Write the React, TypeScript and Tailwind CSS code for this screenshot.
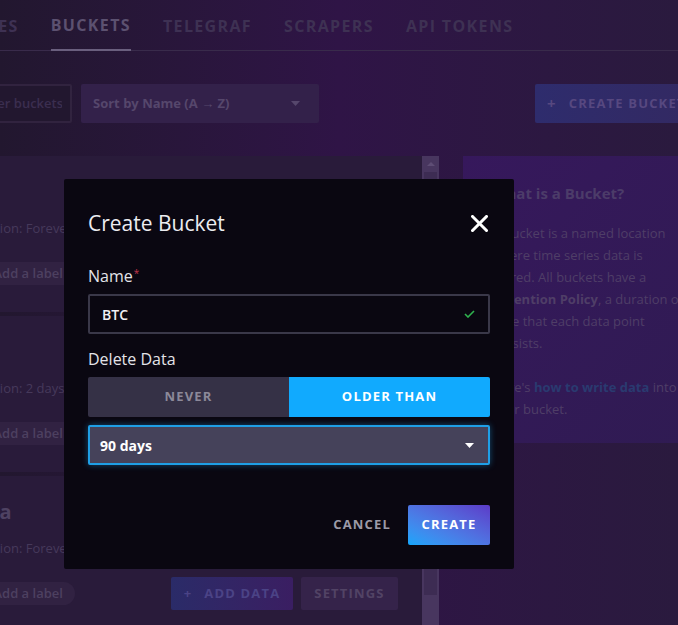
import React from 'react';

interface Bucket {
  name: string;
  retention: string;
}

const tabs = ['SOURCES', 'BUCKETS', 'TELEGRAF', 'SCRAPERS', 'API TOKENS'];

const buckets: Bucket[] = [
  { name: 'LTC', retention: 'Forever' },
  { name: 'SOL', retention: '2 days' },
  { name: 'Tesla', retention: 'Forever' },
];

const Caret = ({ className }: { className?: string }) => (
  <svg width="9" height="5" viewBox="0 0 9 5" className={className}>
    <path d="M0 0h9L4.5 5z" fill="currentColor" />
  </svg>
);

const BucketCard = ({ bucket }: { bucket: Bucket }) => (
  <div className="h-[156px] mb-[4px] bg-[#291b3a] pl-4 pr-6 pt-[23px]">
    <div className="text-[20px] leading-[26px] font-bold text-[#4e4262]">{bucket.name}</div>
    <div className="mt-[14px] text-[13px] leading-[18px] text-[#46395a]">Retention: {bucket.retention}</div>
    <div className="mt-[20px] flex items-center h-[33px]">
      <div className="h-[23px] rounded-full bg-[#312242] pl-3 pr-3 flex items-center gap-[14px] text-[13px] font-semibold text-[#4d4060]">
        <span>+</span>
        <span>Add a label</span>
      </div>
      <div className="ml-auto flex gap-2">
        <div className="h-[33px] w-[122px] rounded-[2px] bg-gradient-to-r from-[#2a2b68] to-[#3a1e62] flex items-center justify-center gap-3 text-[13px] font-bold tracking-[0.09em] text-[#4b4386]">
          <span>+</span>
          <span>ADD DATA</span>
        </div>
        <div className="h-[33px] w-[97px] rounded-[2px] bg-[#35234a] flex items-center justify-center text-[13px] font-bold tracking-[0.09em] text-[#524365]">
          SETTINGS
        </div>
      </div>
    </div>
  </div>
);

const CreateBucketModal = () => (
  <div className="absolute left-[64px] top-[179px] w-[450px] h-[390px] bg-[#0a0711] rounded-[2px] px-6 pt-[30px] pb-6 flex flex-col">
    <div className="flex items-center justify-between h-[28px]">
      <h2 className="text-[21px] leading-[28px] text-[#ececf0]">Create Bucket</h2>
      <svg width="17" height="17" viewBox="0 0 17 17" className="mr-[2px]">
        <path d="M1.5 1.5l14 14M15.5 1.5l-14 14" stroke="#ffffff" strokeWidth="3" strokeLinecap="square" />
      </svg>
    </div>

    <label className="mt-[29px] text-[16px] leading-[20px] font-medium text-[#e3e3e8]">
      Name<sup className="text-[#c2354b] text-[10px] ml-[1px]">*</sup>
    </label>
    <div className="mt-2 h-[40px] border-2 border-[#3a3849] rounded-[2px] flex items-center px-3">
      <span className="text-[14px] font-semibold text-[#f0f0f4]">BTC</span>
      <svg width="11" height="8" viewBox="0 0 11 8" className="ml-auto mr-[1px]">
        <path d="M1 4l3 3 6-6" fill="none" stroke="#2fb24e" strokeWidth="1.6" />
      </svg>
    </div>

    <label className="mt-[15px] text-[16px] leading-[20px] font-medium text-[#e3e3e8]">Delete Data</label>
    <div className="mt-2 h-[40px] flex rounded-[2px] overflow-hidden">
      <div className="flex-1 bg-[#353146] flex items-center justify-center text-[13px] font-bold tracking-[0.09em] text-[#8c8999]">
        NEVER
      </div>
      <div className="flex-1 bg-[#11aafe] flex items-center justify-center text-[13px] font-bold tracking-[0.09em] text-white">
        OLDER THAN
      </div>
    </div>

    <div className="mt-2 h-[40px] bg-[#45425a] border-2 border-[#1f9fe6] rounded-[2px] shadow-[0_0_6px_rgba(31,159,230,0.45)] flex items-center pl-[10px] pr-[14px]">
      <span className="text-[14px] font-bold text-white">90 days</span>
      <Caret className="ml-auto text-white" />
    </div>

    <div className="mt-auto flex items-center justify-end">
      <span className="text-[13px] font-bold tracking-[0.09em] text-[#9c9aa7] mr-[17px]">CANCEL</span>
      <div className="h-[40px] w-[82px] rounded-[2px] bg-gradient-to-tr from-[#0da6fb] to-[#5b3ac8] flex items-center justify-center text-[13px] font-bold tracking-[0.09em] text-white">
        CREATE
      </div>
    </div>
  </div>
);

export default function App() {
  return (
    <div className="relative w-[678px] h-[625px] overflow-hidden bg-gradient-to-r from-[#22172f] via-[#2f1446] to-[#2a1a3e] font-['Open_Sans',sans-serif]">
      <div className="-ml-[120px] w-[900px]">
        {/* tabs */}
        <div className="h-[51px] border-b border-[#392b4b] flex pl-[41px]">
          {tabs.map((tab) => (
            <div
              key={tab}
              className={`mx-4 flex items-center text-[16px] font-bold tracking-[0.085em] -mb-px ${
                tab === 'BUCKETS' ? 'text-[#5c5170] border-b-2 border-[#6a5f7e]' : 'text-[#3e3153]'
              }`}
            >
              {tab}
            </div>
          ))}
        </div>

        {/* controls */}
        <div className="mt-[33px] h-[39px] flex pl-[84px]">
          <div className="w-[108px] h-full border-2 border-[#31233f] bg-[#22172f] rounded-[2px] pl-3 pr-2 flex items-center overflow-hidden whitespace-nowrap text-[13px] font-semibold text-[#3b2e4f]">
            <span className="overflow-hidden">Filter buckets...</span>
          </div>
          <div className="ml-[9px] w-[238px] h-full rounded-[2px] bg-[#33214a] flex items-center px-3 text-[13px] font-bold text-[#56476c]">
            Sort by Name (A → Z)
            <Caret className="ml-auto mr-[7px] text-[#56476c]" />
          </div>
          <div className="ml-[216px] w-[200px] h-full rounded-[2px] bg-gradient-to-r from-[#2e2c6d] to-[#34285f] flex items-center pl-3 gap-3 text-[13px] font-bold tracking-[0.09em] text-[#574880]">
            <span className="text-[15px]">+</span>
            <span>CREATE BUCKET</span>
          </div>
        </div>

        {/* content */}
        <div className="mt-[33px] flex items-start">
          <div className="ml-[64px] w-[478px]">
            {buckets.map((b) => (
              <BucketCard key={b.name} bucket={b} />
            ))}
          </div>
          <div className="w-[17px] h-[480px] bg-[#48365f] flex flex-col">
            <div className="h-[16px] flex items-center justify-center">
              <svg width="8" height="4" viewBox="0 0 8 4">
                <path d="M0 4h8L4 0z" fill="#5e4d75" />
              </svg>
            </div>
            <div className="mx-[2px] h-[423px] bg-[#3d2c53]" />
          </div>
          <div className="ml-[24px] w-[260px] h-[287px] bg-gradient-to-br from-[#36185c] to-[#2f1b52] pl-[29px] pt-[26px]">
            <h3 className="text-[15px] leading-[22px] font-bold text-[#4c3c69]">What is a Bucket?</h3>
            <div className="w-[194px] text-[13px] leading-[22px] text-[#4f3e67]">
              <p className="mt-[18px]">
                A bucket is a named location where time series data is stored. All buckets have a{' '}
                <span className="font-bold">Retention Policy</span>, a duration of time that each data point persists.
              </p>
              <p className="mt-[22px]">
                Here's <span className="font-bold text-[#2a3a70]">how to write data</span> into your bucket.
              </p>
            </div>
          </div>
        </div>
      </div>

      <CreateBucketModal />
    </div>
  );
}
